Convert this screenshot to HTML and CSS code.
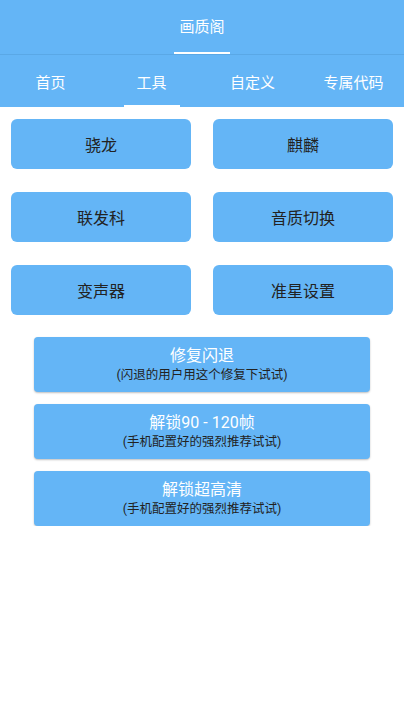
FILE: index.html
```html
<!DOCTYPE html>
<html lang="zh-CN">
<head>
<meta charset="utf-8">
<title>画质阁</title>
<link rel="stylesheet" href="styles.css">
</head>
<body>
<header class="appbar">
  <div class="appbar-title">画质阁</div>
  <div class="appbar-indicator"></div>
</header>
<nav class="tabs">
  <div class="tab">首页</div>
  <div class="tab tab-active">工具</div>
  <div class="tab">自定义</div>
  <div class="tab">专属代码</div>
</nav>
<main class="content">
  <div class="grid">
    <button class="btn">骁龙</button>
    <button class="btn">麒麟</button>
    <button class="btn">联发科</button>
    <button class="btn">音质切换</button>
    <button class="btn">变声器</button>
    <button class="btn">准星设置</button>
  </div>
  <div class="wide-list">
    <button class="wide">
      <span class="wide-title">修复闪退</span>
      <span class="wide-sub">(闪退的用户用这个修复下试试)</span>
    </button>
    <button class="wide">
      <span class="wide-title">解锁90 - 120帧</span>
      <span class="wide-sub">(手机配置好的强烈推荐试试)</span>
    </button>
    <button class="wide">
      <span class="wide-title">解锁超高清</span>
      <span class="wide-sub">(手机配置好的强烈推荐试试)</span>
    </button>
  </div>
</main>
</body>
</html>
```
FILE: styles.css
```css
html, body {
  margin: 0;
  padding: 0;
  background: #ffffff;
  font-family: "Roboto", "Noto Sans CJK SC", sans-serif;
}

.appbar {
  position: relative;
  height: 54px;
  background: #64b5f6;
  border-bottom: 1px solid #5aa8e6;
  display: flex;
  align-items: center;
  justify-content: center;
}

.appbar-title {
  color: #ffffff;
  font-size: 15px;
  line-height: 20px;
}

.appbar-indicator {
  position: absolute;
  left: 174px;
  bottom: 0;
  width: 56px;
  height: 2px;
  background: #ffffff;
}

.tabs {
  display: flex;
  height: 52px;
  background: #64b5f6;
}

.tab {
  flex: 1;
  display: flex;
  align-items: center;
  justify-content: center;
  color: #ffffff;
  font-size: 15px;
  position: relative;
}

.tab-active::after {
  content: "";
  position: absolute;
  left: 50%;
  bottom: 0;
  width: 56px;
  margin-left: -28px;
  height: 2px;
  background: #ffffff;
}

.content {
  padding: 12px 0 0;
}

.grid {
  display: grid;
  grid-template-columns: 180px 180px;
  grid-auto-rows: 50px;
  column-gap: 22px;
  row-gap: 23px;
  padding: 0 11px;
}

.btn {
  border: none;
  margin: 0;
  padding: 0;
  background: #64b5f6;
  border-radius: 6px;
  color: #222222;
  font-family: inherit;
  font-size: 16px;
}

.wide-list {
  display: flex;
  flex-direction: column;
  gap: 12px;
  padding: 22px 34px 0;
}

.wide {
  border: none;
  margin: 0;
  height: 55px;
  padding: 0;
  background: #64b5f6;
  border-radius: 4px;
  box-shadow: 0 1px 2px rgba(0, 0, 0, 0.25);
  display: flex;
  flex-direction: column;
  align-items: center;
  justify-content: center;
  font-family: inherit;
}

.wide-title {
  color: #ffffff;
  font-size: 16px;
  line-height: 21px;
}

.wide-sub {
  color: #222222;
  font-size: 12.5px;
  line-height: 18px;
}
```
